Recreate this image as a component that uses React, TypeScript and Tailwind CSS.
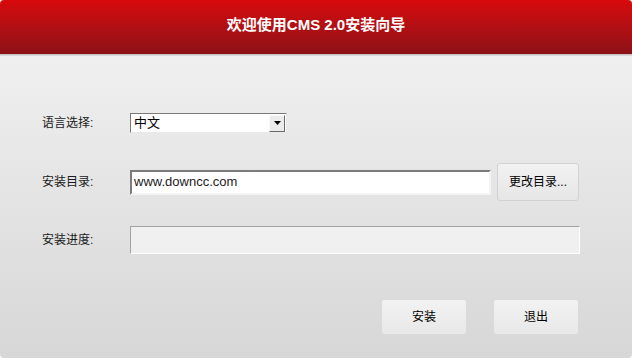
export default function App() {
  const font = { fontFamily: '"Liberation Sans", "Noto Sans CJK SC", sans-serif' };
  return (
    <div
      className="flex h-[358px] w-[632px] flex-col overflow-hidden rounded-[4px] bg-gradient-to-b from-[#f4f4f4] to-[#d7d7d7] text-[12px] text-[#1a1a1a]"
      style={font}
    >
      {/* title bar */}
      <div className="flex h-[54px] shrink-0 items-center justify-center bg-gradient-to-b from-[#d8090b] to-[#8c1116] pb-[4px]">
        <span className="text-[15px] font-bold text-white">欢迎使用CMS 2.0安装向导</span>
      </div>
      <div className="h-[1px] bg-[#c4c4c4]" />
      <div className="h-[1px] bg-[#d8d8d8]" />

      <div className="flex flex-col pl-[42px]">
        {/* language */}
        <div className="mt-[57px] flex h-[20px] items-center">
          <span className="w-[88px]">语言选择:</span>
          <div className="flex h-[20px] w-[157px] items-center border border-t-[#7a7a7a] border-l-[#7a7a7a] border-r-[#e8e8e8] border-b-[#e8e8e8] bg-white">
            <span className="flex-1 pl-[3px] text-[13px] text-black">中文</span>
            <div className="mr-[1px] flex h-[17px] w-[16px] items-center justify-center border border-t-[#fafafa] border-l-[#fafafa] border-r-[#6a6a6a] border-b-[#6a6a6a] bg-[#ececec]">
              <svg width="7" height="4" viewBox="0 0 7 4">
                <path d="M0 0h7L3.5 4z" fill="#000" />
              </svg>
            </div>
          </div>
        </div>

        {/* directory */}
        <div className="mt-[30px] flex h-[38px] items-center">
          <span className="w-[88px]">安装目录:</span>
          <div className="flex h-[25px] w-[361px] items-center border-2 border-t-[#7c7c7c] border-l-[#7c7c7c] border-r-[#f4f4f4] border-b-[#f4f4f4] bg-white pl-[2px]">
            <span className="text-[13px] text-[#1c1c1c]">www.downcc.com</span>
          </div>
          <button className="ml-[6px] flex h-[38px] w-[82px] items-center justify-center rounded-[3px] border border-[#d2d2d2] bg-gradient-to-b from-[#f2f2f2] to-[#e6e6e6] text-[12px] text-black">
            更改目录...
          </button>
        </div>

        {/* progress */}
        <div className="mt-[25px] flex h-[28px] items-center">
          <span className="w-[88px]">安装进度:</span>
          <div className="h-[28px] w-[450px] border border-t-[#a2a2a2] border-l-[#a2a2a2] border-r-white border-b-white bg-[#f0f0f0]" />
        </div>

        {/* actions */}
        <div className="mt-[45px] flex h-[36px] justify-end gap-[26px] pr-[53px]">
          <button className="flex h-[36px] w-[86px] items-center justify-center rounded-[3px] border border-[#dadada] bg-gradient-to-b from-[#f2f2f2] to-[#e8e8e8] text-[12px] text-black">
            安装
          </button>
          <button className="flex h-[36px] w-[86px] items-center justify-center rounded-[3px] border border-[#dadada] bg-gradient-to-b from-[#f2f2f2] to-[#e8e8e8] text-[12px] text-black">
            退出
          </button>
        </div>
      </div>
    </div>
  );
}
